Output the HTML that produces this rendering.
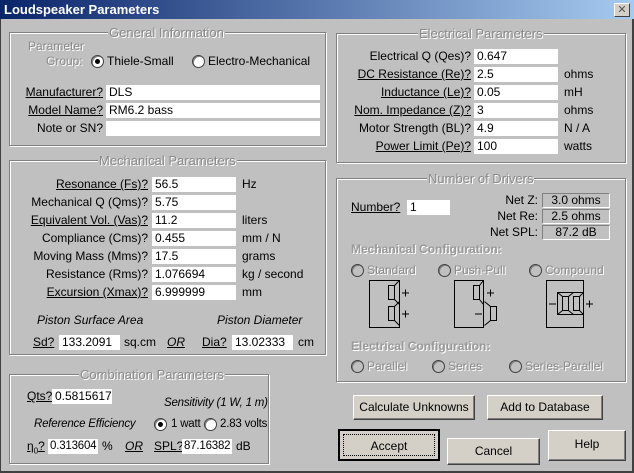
<!DOCTYPE html>
<html><head><meta charset="utf-8"><style>
*{margin:0;padding:0;box-sizing:border-box}
body{width:634px;height:473px;background:#c0c0c0;position:relative;overflow:hidden;font:12px "Liberation Sans",Arial,sans-serif;color:#000}
.a{position:absolute;white-space:nowrap;line-height:15px}
.tb{position:absolute;left:0;top:0;width:634px;height:19px;background:linear-gradient(90deg,#0a246a,#a6caf0);color:#fff;font-weight:bold;font-size:13px;line-height:19px;padding-left:4px}
.x{position:absolute;left:614px;top:3px;width:16px;height:14px;background:#d4d0c8;border:1px solid;border-color:#fff #404040 #404040 #fff;font-size:11px;line-height:12px;text-align:center;color:#555}
.g{position:absolute;border:1px solid #808080;box-shadow:inset 1px 1px 0 #fff,1px 1px 0 #fff}
.gt{position:absolute;background:#c0c0c0;color:#8a8a8a;text-shadow:1px 1px 0 #fff;line-height:14px;padding:0 1px;white-space:nowrap}
.dis{color:#8a8a8a;text-shadow:1px 1px 0 #fff}
.in{position:absolute;background:#fff;height:15px;line-height:15px;padding-left:3px;overflow:hidden;white-space:nowrap}
.sm{font-size:11.5px;letter-spacing:-0.2px;padding-left:2px}
.r{text-align:right}
u{text-decoration:underline}
.rd{position:absolute;width:13px;height:13px;border-radius:50%;background:#fff;border:1px solid #404040;box-shadow:inset 1px 1px 0 #808080}
.rd.on::after{content:"";position:absolute;left:3px;top:3px;width:5px;height:5px;border-radius:50%;background:#000}
.rd.d{background:#c0c0c0}
.bt{position:absolute;background:#d4d0c8;border:1px solid;border-color:#fff #404040 #404040 #fff;box-shadow:inset -1px -1px 0 #808080;text-align:center}
.nb{position:absolute;border:1px solid;border-color:#808080 #fff #fff #808080;text-align:center;line-height:13px;height:15px;width:68px;left:542px}
</style></head><body>
<div class="tb">Loudspeaker Parameters</div><div class="x">✕</div>
<div style="position:absolute;left:0;top:19px;width:1px;height:454px;background:#404040"></div>
<div style="position:absolute;left:632px;top:19px;width:2px;height:454px;background:#404040"></div>
<div style="position:absolute;left:0;top:471px;width:634px;height:2px;background:#404040"></div>

<!-- General -->
<div class="g" style="left:9px;top:32px;width:317px;height:114px"></div>
<div class="gt" style="left:108px;top:26px;font-size:13px">General Information</div>
<div class="a dis" style="left:28px;top:39px">Parameter</div>
<div class="a dis" style="left:46px;top:54px">Group:</div>
<div class="rd on" style="left:91px;top:55px"></div><div class="a" style="left:107px;top:54px">Thiele-Small</div>
<div class="rd" style="left:192px;top:55px"></div><div class="a" style="left:208px;top:54px">Electro-Mechanical</div>
<div class="a r" style="left:0;width:103px;top:85px"><u>Manufacturer?</u></div><div class="in" style="left:106px;top:85px;width:214px">DLS</div>
<div class="a r" style="left:0;width:103px;top:103px"><u>Model Name?</u></div><div class="in" style="left:106px;top:103px;width:214px">RM6.2 bass</div>
<div class="a r" style="left:0;width:103px;top:121px">Note or SN?</div><div class="in" style="left:106px;top:121px;width:214px"></div>

<!-- Mechanical -->
<div class="g" style="left:9px;top:160px;width:317px;height:195px"></div>
<div class="gt" style="left:98px;top:154px;font-size:13px">Mechanical Parameters</div>
<div class="a r" style="left:0;width:148px;top:177px"><u>Resonance (Fs)?</u></div><div class="in" style="left:152px;top:177px;width:84px">56.5</div><div class="a" style="left:242px;top:177px">Hz</div>
<div class="a r" style="left:0;width:148px;top:195px">Mechanical Q (Qms)?</div><div class="in" style="left:152px;top:195px;width:84px">5.75</div>
<div class="a r" style="left:0;width:148px;top:213px"><u>Equivalent Vol. (Vas)?</u></div><div class="in" style="left:152px;top:213px;width:84px">11.2</div><div class="a" style="left:242px;top:213px">liters</div>
<div class="a r" style="left:0;width:148px;top:231px">Compliance (Cms)?</div><div class="in" style="left:152px;top:231px;width:84px">0.455</div><div class="a" style="left:242px;top:231px">mm / N</div>
<div class="a r" style="left:0;width:148px;top:249px">Moving Mass (Mms)?</div><div class="in" style="left:152px;top:249px;width:84px">17.5</div><div class="a" style="left:242px;top:249px">grams</div>
<div class="a r" style="left:0;width:148px;top:267px">Resistance (Rms)?</div><div class="in" style="left:152px;top:267px;width:84px">1.076694</div><div class="a" style="left:242px;top:267px">kg / second</div>
<div class="a r" style="left:0;width:148px;top:285px"><u>Excursion (Xmax)?</u></div><div class="in" style="left:152px;top:285px;width:84px">6.999999</div><div class="a" style="left:242px;top:285px">mm</div>
<div class="a" style="left:37px;top:313px;font-style:italic">Piston Surface Area</div>
<div class="a" style="left:217px;top:313px;font-style:italic">Piston Diameter</div>
<div class="a" style="left:33px;top:335px"><u>Sd?</u></div><div class="in" style="left:59px;top:335px;width:61px">133.2091</div><div class="a" style="left:124px;top:335px">sq.cm</div>
<div class="a" style="left:167px;top:335px;font-style:italic"><u>OR</u></div>
<div class="a" style="left:202px;top:335px"><u>Dia?</u></div><div class="in" style="left:232px;top:335px;width:61px">13.02333</div><div class="a" style="left:298px;top:335px">cm</div>

<!-- Combination -->
<div class="g" style="left:9px;top:374px;width:260px;height:90px"></div>
<div class="gt" style="left:79px;top:368px;font-size:13px">Combination Parameters</div>
<div class="a" style="left:27px;top:389px"><u>Qts?</u></div><div class="in" style="left:52px;top:389px;width:60px">0.5815617</div>
<div class="a" style="left:164px;top:396px;font-style:italic;font-size:11.5px;letter-spacing:-0.2px">Sensitivity (1 W, 1 m)</div>
<div class="a" style="left:34px;top:417px;font-style:italic;font-size:11.5px;letter-spacing:-0.2px">Reference Efficiency</div>
<div class="rd on" style="left:154px;top:418px"></div><div class="a sm" style="left:169px;top:417px">1 watt</div>
<div class="rd" style="left:204px;top:418px"></div><div class="a sm" style="left:218px;top:417px">2.83 volts</div>
<div class="a" style="left:27px;top:439px"><u>η<sub style="font-size:8px">0</sub>?</u></div><div class="in sm" style="left:48px;top:439px;width:50px">0.313604</div><div class="a" style="left:102px;top:439px">%</div>
<div class="a" style="left:125px;top:439px;font-style:italic"><u>OR</u></div>
<div class="a" style="left:154px;top:439px"><u>SPL?</u></div><div class="in sm" style="left:182px;top:439px;width:50px">87.16382</div><div class="a" style="left:236px;top:439px">dB</div>

<!-- Electrical -->
<div class="g" style="left:336px;top:33px;width:290px;height:130px"></div>
<div class="gt" style="left:418px;top:27px;font-size:13px">Electrical Parameters</div>
<div class="a r" style="left:330px;width:141px;top:49px">Electrical Q (Qes)?</div><div class="in" style="left:474px;top:49px;width:84px">0.647</div>
<div class="a r" style="left:330px;width:141px;top:67px"><u>DC Resistance (Re)?</u></div><div class="in" style="left:474px;top:67px;width:84px">2.5</div><div class="a" style="left:564px;top:67px">ohms</div>
<div class="a r" style="left:330px;width:141px;top:85px"><u>Inductance (Le)?</u></div><div class="in" style="left:474px;top:85px;width:84px">0.05</div><div class="a" style="left:564px;top:85px">mH</div>
<div class="a r" style="left:330px;width:141px;top:103px"><u>Nom. Impedance (Z)?</u></div><div class="in" style="left:474px;top:103px;width:84px">3</div><div class="a" style="left:564px;top:103px">ohms</div>
<div class="a r" style="left:330px;width:141px;top:121px">Motor Strength (BL)?</div><div class="in" style="left:474px;top:121px;width:84px">4.9</div><div class="a" style="left:564px;top:121px">N / A</div>
<div class="a r" style="left:330px;width:141px;top:139px"><u>Power Limit (Pe)?</u></div><div class="in" style="left:474px;top:139px;width:84px">100</div><div class="a" style="left:564px;top:139px">watts</div>

<!-- Drivers -->
<div class="g" style="left:336px;top:178px;width:290px;height:204px"></div>
<div class="gt" style="left:427px;top:172px;font-size:13px">Number of Drivers</div>
<div class="a" style="left:351px;top:200px"><u>Number?</u></div><div class="in" style="left:407px;top:200px;width:43px">1</div>
<div class="a r" style="left:480px;width:58px;top:193px">Net Z:</div><div class="nb" style="top:193px">3.0 ohms</div>
<div class="a r" style="left:480px;width:58px;top:209px">Net Re:</div><div class="nb" style="top:209px">2.5 ohms</div>
<div class="a r" style="left:480px;width:58px;top:225px">Net SPL:</div><div class="nb" style="top:225px">87.2 dB</div>
<div class="a dis" style="left:351px;top:242px;font-weight:bold;color:#999">Mechanical Configuration:</div>
<div class="rd d" style="left:351px;top:264px"></div><div class="a dis" style="left:367px;top:263px">Standard</div>
<div class="rd d" style="left:438px;top:264px"></div><div class="a dis" style="left:454px;top:263px">Push-Pull</div>
<div class="rd d" style="left:529px;top:264px"></div><div class="a dis" style="left:545px;top:263px">Compound</div>
<svg style="position:absolute;left:0;top:0" width="634" height="473" fill="none" stroke="#000" stroke-width="1">
<rect x="369.5" y="280.5" width="30" height="47"/>
<rect x="388.5" y="285.5" width="6" height="14"/><path d="M394.5 285.5l5-5M394.5 299.5l5 5"/>
<rect x="388.5" y="306.5" width="6" height="14"/><path d="M394.5 306.5l5-5M394.5 320.5l5 5"/>
<path d="M402 293h7M405.5 289.5v7M402 314h7M405.5 310.5v7"/>
<rect x="454.5" y="280.5" width="29" height="47"/>
<rect x="473.5" y="285.5" width="6" height="14"/><path d="M479.5 285.5l4-5M479.5 299.5l4 5"/>
<rect x="490.5" y="306.5" width="6" height="14"/><path d="M490.5 306.5l-6-5M490.5 320.5l-6 5"/>
<path d="M487 293h7M490.5 289.5v7M475 314h7"/>
<rect x="546.5" y="280.5" width="37" height="47"/>
<rect x="557.5" y="292.5" width="26" height="22"/>
<rect x="562.5" y="296.5" width="6" height="14"/><rect x="573.5" y="296.5" width="6" height="14"/>
<path d="M557.5 292.5l5 4M557.5 314.5l5-4M568.5 296.5l5-4M568.5 310.5l5 4M579.5 296.5l4-4M579.5 310.5l4 4"/>
<path d="M549 304h7M586 304h7M589.5 300.5v7"/>
</svg>
<div class="a dis" style="left:351px;top:339px;font-weight:bold;color:#999">Electrical Configuration:</div>
<div class="rd d" style="left:351px;top:360px"></div><div class="a dis" style="left:367px;top:359px">Parallel</div>
<div class="rd d" style="left:432px;top:360px"></div><div class="a dis" style="left:448px;top:359px">Series</div>
<div class="rd d" style="left:509px;top:360px"></div><div class="a dis" style="left:525px;top:359px">Series-Parallel</div>

<div class="bt" style="left:353px;top:395px;width:122px;height:25px;line-height:23px">Calculate Unknowns</div>
<div class="bt" style="left:487px;top:395px;width:116px;height:25px;line-height:23px">Add to Database</div>
<div class="bt" style="left:338px;top:429px;width:102px;height:32px;line-height:30px;border:2px solid #000;box-shadow:none"><div style="position:absolute;left:3px;top:3px;right:3px;bottom:3px;border:1px dotted #000"></div>Accept</div>
<div class="bt" style="left:447px;top:438px;width:93px;height:27px;line-height:25px">Cancel</div>
<div class="bt" style="left:548px;top:430px;width:78px;height:31px;line-height:27px">Help</div>
</body></html>
